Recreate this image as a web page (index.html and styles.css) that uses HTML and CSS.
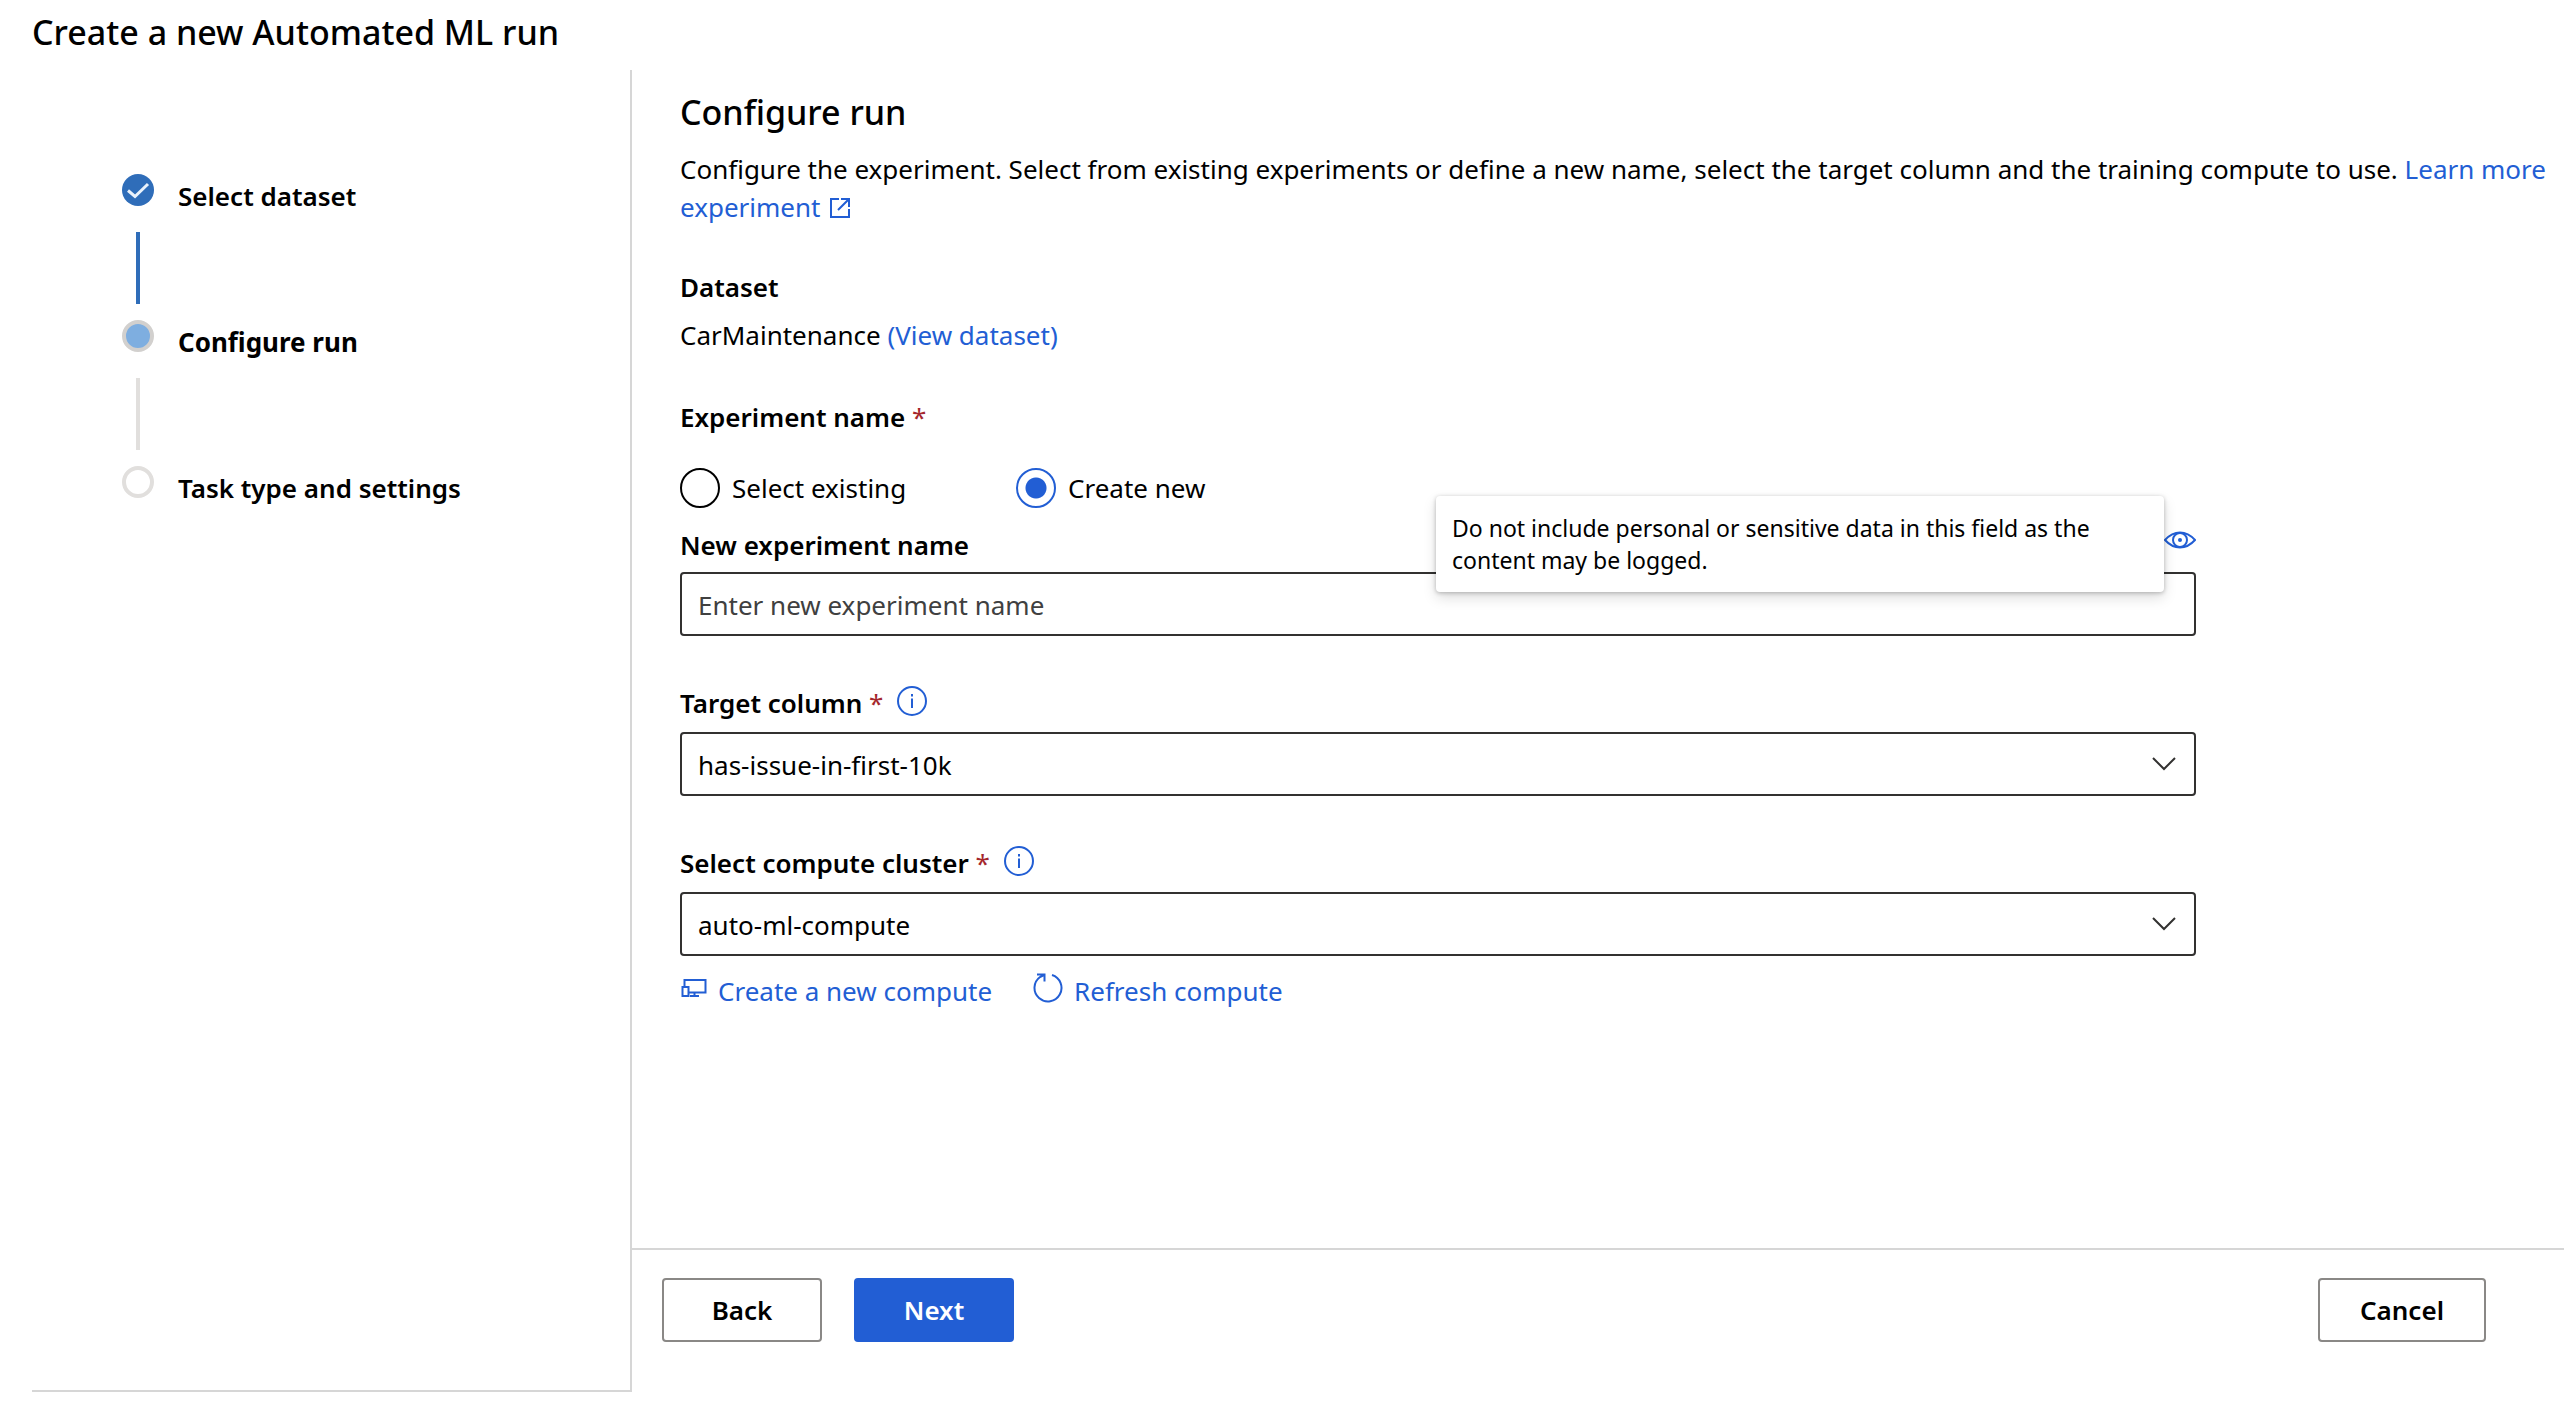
FILE: index.html
```html
<!DOCTYPE html>
<html lang="en">
<head>
<meta charset="utf-8">
<title>Create a new Automated ML run</title>
<meta name="viewport" content="width=device-width, initial-scale=1">
<link rel="stylesheet" href="styles.css">
</head>
<body>
<div class="wizard">
  <header class="wizard-header">
    <h1 class="title">Create a new Automated ML run</h1>
  </header>
  <div class="wizard-body">
    <nav class="steps-panel" aria-label="Wizard steps">
      <ol class="steps">
        <li class="step done">
          <span class="marker">
            <svg class="check" viewBox="0 0 32 32" aria-hidden="true"><path d="M6 16.500 13 22.500 26 10"/></svg>
          </span>
          <span class="step-label">Select dataset</span>
        </li>
        <li class="step current" aria-current="step">
          <span class="marker"></span>
          <span class="step-label">Configure run</span>
        </li>
        <li class="step">
          <span class="marker"></span>
          <span class="step-label">Task type and settings</span>
        </li>
      </ol>
    </nav>
    <main class="content">
      <form class="form" id="run-form">
        <h2 class="title">Configure run</h2>
        <p class="intro">Configure the experiment. Select from existing experiments or define a new name, select the target column and the training compute to use. <a href="#learn">Learn more experiment <svg class="icon-external" viewBox="0 0 22 22" aria-hidden="true"><path d="M10 2H2V20H20V12M12 2H20V10M20 2 9 13"/></svg></a></p>

        <h3 class="label">Dataset</h3>
        <p class="dataset">CarMaintenance <a href="#dataset">(View dataset)</a></p>

        <fieldset class="choice">
          <legend class="label">Experiment name <span class="required">*</span></legend>
          <div class="radios">
            <label class="radio"><input type="radio" name="mode" value="existing"> Select existing</label>
            <label class="radio"><input type="radio" name="mode" value="new" checked> Create new</label>
          </div>
        </fieldset>

        <div class="field">
          <div class="label-row with-tooltip">
            <label class="label" for="experiment">New experiment name</label>
            <button type="button" class="icon-button eye" aria-label="Data notice">
              <svg class="icon-eye" viewBox="0 0 32 20" aria-hidden="true"><path d="M1 10C6 4.500 10.500 2.500 16 2.500S26 4.500 31 10C26 15.500 21.500 17.500 16 17.500S6 15.500 1 10Z"/><circle cx="16" cy="10" r="7"/><circle class="pupil" cx="16" cy="10" r="2"/></svg>
            </button>
            <div class="tooltip" role="tooltip">Do not include personal or sensitive data in this field as the content may be logged.</div>
          </div>
          <input class="control" id="experiment" type="text" placeholder="Enter new experiment name">
        </div>

        <div class="field">
          <div class="label-row">
            <label class="label" for="target">Target column <span class="required">*</span></label>
            <button type="button" class="icon-button" aria-label="About target column">
              <svg class="icon-info" viewBox="0 0 30 30" aria-hidden="true"><circle cx="15" cy="15" r="14"/><path d="M15 12.500V22M15 8V10.500"/></svg>
            </button>
          </div>
          <div class="select">
            <select class="control" id="target"><option>has-issue-in-first-10k</option></select>
            <svg class="chevron" viewBox="0 0 24 14" aria-hidden="true"><path d="M1 1 12 12 23 1"/></svg>
          </div>
        </div>

        <div class="field">
          <div class="label-row">
            <label class="label" for="cluster">Select compute cluster <span class="required">*</span></label>
            <button type="button" class="icon-button" aria-label="About compute cluster">
              <svg class="icon-info" viewBox="0 0 30 30" aria-hidden="true"><circle cx="15" cy="15" r="14"/><path d="M15 12.500V22M15 8V10.500"/></svg>
            </button>
          </div>
          <div class="select">
            <select class="control" id="cluster"><option>auto-ml-compute</option></select>
            <svg class="chevron" viewBox="0 0 24 14" aria-hidden="true"><path d="M1 1 12 12 23 1"/></svg>
          </div>
        </div>

        <div class="links">
          <a class="action" href="#create"><svg class="icon-compute" viewBox="0 0 28 28" aria-hidden="true"><path d="M4.500 15V8H25.500V20.500H9M2.500 15H8.500V24H2.500ZM10 24H19M14.500 20.500V24"/></svg>Create a new compute</a>
          <a class="action" href="#refresh"><svg class="icon-refresh" viewBox="0 0 32 32" aria-hidden="true"><path d="M20 3A13.500 13.500 0 1 1 8 5L12 3M5 2.500H12.500V9.500"/></svg>Refresh compute</a>
        </div>
      </form>
      <footer class="actions">
        <button type="button" class="button">Back</button>
        <button type="submit" form="run-form" class="button primary">Next</button>
        <button type="button" class="button cancel">Cancel</button>
      </footer>
    </main>
  </div>
</div>
</body>
</html>
```
FILE: styles.css
```css
* {
  box-sizing: border-box;
}

body {
  margin: 0;
  background: #fff;
  color: #000;
  font: 26px/38px "Noto Sans", "Open Sans", sans-serif;
}

h1, h2, h3, p, ol, fieldset {
  margin: 0;
  padding: 0;
  border: 0;
}

a {
  color: #225ed4;
  text-decoration: none;
}

svg {
  flex: none;
  fill: none;
  stroke: currentColor;
  stroke-width: 2;
}

button, input, select {
  font: inherit;
  color: inherit;
}

.wizard {
  display: flex;
  flex-direction: column;
  min-height: 100vh;
  padding-bottom: 24px;
}

.wizard-header {
  padding: 8px 32px 14px;
}

.title {
  font-size: 34px;
  line-height: 48px;
  font-weight: 500;
}

.wizard-body {
  display: flex;
  flex: 1;
}

.steps-panel {
  width: 600px;
  flex: none;
  margin-left: 32px;
  padding: 104px 0 0 90px;
  border-right: 2px solid #d6d6d6;
  border-bottom: 2px solid #d6d6d6;
}

.steps {
  display: flex;
  flex-direction: column;
  gap: 26px;
  list-style: none;
}

.step {
  display: grid;
  grid-template-columns: 32px 1fr;
  column-gap: 24px;
  row-gap: 26px;
}

.step:not(:last-child)::after {
  content: "";
  width: 4px;
  height: 72px;
  margin-bottom: -10px;
  justify-self: center;
  background: #e1dfdd;
}

.step.done::after {
  background: #2f6db9;
}

.marker {
  width: 32px;
  height: 32px;
  border: 4px solid #e1dfdd;
  border-radius: 50%;
}

.done .marker {
  border: 0;
  background: #2f6db9;
}

.current .marker {
  border-color: #d2d0ce;
  background: #7eaee0;
}

.check {
  display: block;
  stroke: #eaf2fb;
  stroke-width: 3;
}

.step-label {
  height: 32px;
  padding-top: 3px;
  font-weight: 600;
}

.current .step-label {
  font-weight: 700;
}

.content {
  display: flex;
  flex: 1;
  flex-direction: column;
  min-width: 0;
}

.form {
  flex: 1;
  padding: 18px 0 0 48px;
}

.intro {
  margin-top: 14px;
}

.icon-external {
  width: 22px;
  height: 22px;
  margin-left: 2px;
  vertical-align: -2px;
}

.label {
  padding: 0;
  font-size: 26px;
  line-height: 38px;
  font-weight: 600;
}

h3.label {
  margin-top: 42px;
}

.dataset {
  margin-top: 10px;
}

.required {
  color: #a4262c;
  font-weight: 400;
}

.choice {
  margin-top: 44px;
}

.radios {
  display: flex;
  padding-top: 32px;
}

.radio {
  display: flex;
  align-items: center;
  gap: 12px;
  width: 336px;
  height: 40px;
}

.radio input {
  appearance: none;
  width: 40px;
  height: 40px;
  margin: 0;
  border: 2px solid #000;
  border-radius: 50%;
}

.radio input:checked {
  border-color: #225ed4;
  background: radial-gradient(circle, #225ed4 10px, transparent 11px);
}

.field {
  max-width: 1516px;
  margin-bottom: 48px;
}

.label-row {
  position: relative;
  display: flex;
  align-items: flex-start;
  gap: 14px;
  height: 48px;
}

.with-tooltip {
  height: 64px;
  padding-top: 18px;
}

.icon-button {
  display: flex;
  margin-top: 2px;
  padding: 0;
  border: 0;
  background: none;
  color: #225ed4;
}

.eye {
  margin-top: 4px;
  margin-left: auto;
}

.icon-eye {
  width: 32px;
  height: 20px;
}

.pupil {
  fill: currentColor;
  stroke: none;
}

.icon-info {
  width: 30px;
  height: 30px;
}

.tooltip {
  position: absolute;
  right: 32px;
  bottom: -20px;
  width: 728px;
  padding: 16px;
  border-radius: 4px;
  background: #fff;
  box-shadow: 0 6px 14px rgba(0, 0, 0, 0.13), 0 1px 4px rgba(0, 0, 0, 0.25);
  font-size: 23px;
  line-height: 32px;
}

.control {
  display: block;
  width: 100%;
  height: 64px;
  padding: 2px 16px 0;
  border: 2px solid #323130;
  border-radius: 4px;
  background: #fff;
}

.control::placeholder {
  color: #404040;
  opacity: 1;
}

.select {
  display: grid;
  align-items: center;
}

.select > * {
  grid-area: 1 / 1;
}

.select .control {
  appearance: none;
}

.chevron {
  width: 24px;
  height: 14px;
  margin-right: 20px;
  justify-self: end;
  pointer-events: none;
  color: #323130;
}

.links {
  display: flex;
  gap: 40px;
  margin-top: -32px;
}

.action {
  display: flex;
  gap: 10px;
}

.icon-compute {
  width: 28px;
  height: 28px;
}

.icon-refresh {
  width: 32px;
  height: 32px;
}

.actions {
  display: flex;
  gap: 32px;
  height: 144px;
  padding: 28px 78px 0 30px;
  border-top: 2px solid #d6d6d6;
}

.button {
  min-width: 160px;
  height: 64px;
  padding: 0 40px;
  border: 2px solid #8a8886;
  border-radius: 4px;
  background: #fff;
  font-weight: 600;
}

.button.primary {
  border-color: #225ed4;
  background: #225ed4;
  color: #fff;
}

.button.cancel {
  margin-left: auto;
}
```
